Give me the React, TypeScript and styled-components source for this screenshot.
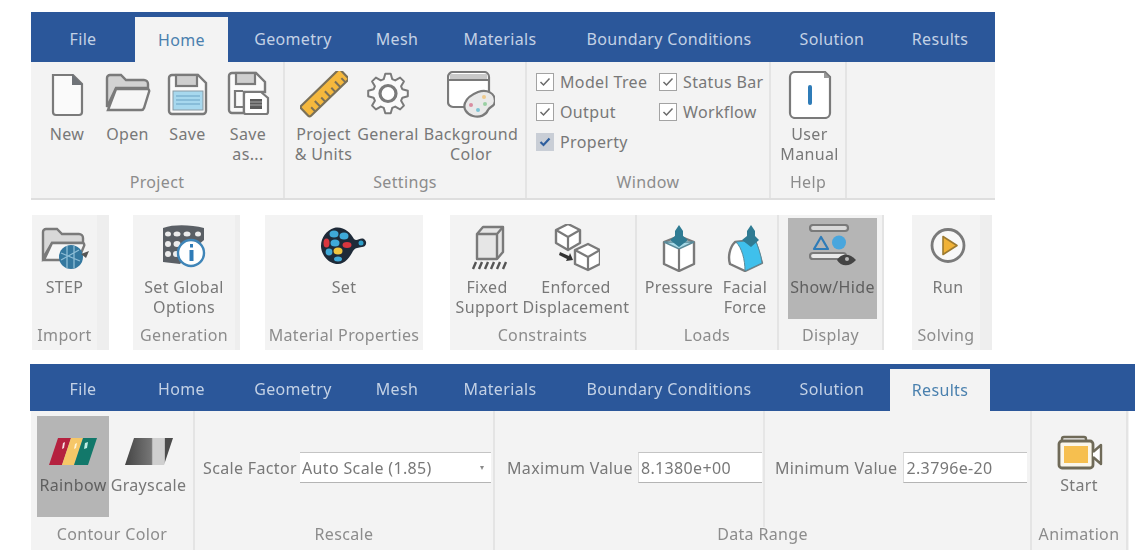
import React, { ReactNode } from "react";
import styled, { createGlobalStyle } from "styled-components";

const GlobalStyle = createGlobalStyle`
  html, body {
    margin: 0;
    padding: 0;
    background: #fff;
  }
  body {
    font-family: "Noto Sans", "Open Sans", sans-serif;
    font-size: 16px;
    letter-spacing: 0.35px;
    color: #6a6a6a;
  }
`;

const Page = styled.div`
  width: 1146px;
  height: 558px;
  overflow: hidden;
  display: flex;
  flex-direction: column;
  filter: blur(0.45px);
`;

const Ribbon = styled.section<{ $ml: number; $mt: number; $w: number }>`
  margin-left: ${(p) => p.$ml}px;
  margin-top: ${(p) => p.$mt}px;
  width: ${(p) => p.$w}px;
`;

const TabBar = styled.div<{ $lead: number; $h: number }>`
  display: flex;
  height: ${(p) => p.$h}px;
  padding-left: ${(p) => p.$lead}px;
  background: #2b579a;
`;

const Tab = styled.div<{ $w: number; $dy: number; $active?: boolean }>`
  width: ${(p) => p.$w}px;
  box-sizing: border-box;
  display: flex;
  align-items: center;
  justify-content: center;
  color: ${(p) => (p.$active ? "#4a80ae" : "#c3d1e5")};
  background: ${(p) => (p.$active ? "#f3f3f3" : "transparent")};
  margin-top: ${(p) => (p.$active ? "5px" : "0")};
  padding-top: ${(p) => (p.$active ? 0 : p.$dy)}px;
`;

const Body = styled.div<{ $w?: number; $ml?: number; $h: number; $line?: boolean }>`
  display: flex;
  width: ${(p) => (p.$w ? `${p.$w}px` : "auto")};
  margin-left: ${(p) => p.$ml ?? 0}px;
  height: ${(p) => p.$h}px;
  background: #f3f3f3;
  box-sizing: border-box;
  border-bottom: ${(p) => (p.$line ? "2px solid #dedede" : "0")};
`;

const PanelRow = styled.div`
  display: flex;
  margin-top: 15px;
  height: 135px;
`;

const Group = styled.div<{ $w: number; $ml?: number; $sep?: boolean; $strip?: number }>`
  width: ${(p) => p.$w}px;
  margin-left: ${(p) => p.$ml ?? 0}px;
  box-sizing: border-box;
  padding-right: ${(p) => p.$strip ?? 0}px;
  display: flex;
  flex-direction: column;
  background: #f3f3f3;
  border-right: ${(p) => (p.$sep ? "2px solid #e4e4e4" : "0")};
  box-shadow: ${(p) => (p.$strip ? `inset -${p.$strip}px 0 0 #eeeeee` : "none")};
`;

const GroupContent = styled.div<{ $pt: number; $pl?: number; $center?: boolean }>`
  display: flex;
  justify-content: ${(p) => (p.$center ? "center" : "flex-start")};
  padding-top: ${(p) => p.$pt}px;
  padding-left: ${(p) => p.$pl ?? 0}px;
  height: 101px;
`;

const GroupLabel = styled.div`
  flex: 1;
  display: flex;
  align-items: center;
  justify-content: center;
  line-height: 20px;
  color: #8c8c8c;
  white-space: nowrap;
`;

const ToolButton = styled.div<{ $w: number; $active?: boolean }>`
  width: ${(p) => p.$w}px;
  height: 101px;
  flex: none;
  display: flex;
  flex-direction: column;
  align-items: center;
  color: ${(p) => (p.$active ? "#5f5f5f" : "#787878")};
  background: ${(p) => (p.$active ? "#b5b5b5" : "transparent")};
`;

const IconSlot = styled.div`
  height: 59px;
  display: flex;
  align-items: center;
  justify-content: center;
`;

const ToolLabel = styled.div`
  line-height: 20px;
  text-align: center;
  white-space: nowrap;
`;

const CheckGrid = styled.div`
  display: grid;
  grid-template-columns: 123px auto;
  grid-auto-rows: 30px;
  padding: 2px 0 0 9px;
`;

const CheckRow = styled.div`
  display: flex;
  align-items: center;
  gap: 6px;
  color: #787878;
  white-space: nowrap;
`;

const Box = styled.span<{ $on?: boolean }>`
  width: 18px;
  height: 18px;
  box-sizing: border-box;
  display: flex;
  align-items: center;
  justify-content: center;
  background: ${(p) => (p.$on ? "#c9ced6" : "#fff")};
  border: 1px solid ${(p) => (p.$on ? "#c9ced6" : "#a3a3a3")};
`;

const Form = styled.div<{ $pl: number; $gap: number }>`
  display: flex;
  align-items: center;
  gap: ${(p) => p.$gap}px;
  height: 31px;
  margin-top: 41px;
  padding-left: ${(p) => p.$pl}px;
  color: #787878;
  white-space: nowrap;
`;

const Split = styled.div`
  display: flex;
  height: 106px;
`;

const SplitCell = styled.div<{ $w: number; $sep?: boolean }>`
  width: ${(p) => p.$w}px;
  box-sizing: border-box;
  height: 116px;
  border-right: ${(p) => (p.$sep ? "2px solid #e6e6e6" : "0")};
`;

const SelectBox = styled.div`
  width: 191px;
  height: 31px;
  box-sizing: border-box;
  display: flex;
  align-items: center;
  justify-content: space-between;
  padding: 0 7px 0 2px;
  background: #fff;
  border-top: 1px solid #c4c4c4;
  border-bottom: 1px solid #b4b4b4;
`;

const Caret = styled.span`
  width: 0;
  height: 0;
  border-left: 2.5px solid transparent;
  border-right: 2.5px solid transparent;
  border-top: 4px solid #8a8a8a;
`;

const ValueInput = styled.input`
  width: 124px;
  height: 31px;
  box-sizing: border-box;
  padding: 0 2px;
  font: inherit;
  letter-spacing: inherit;
  color: #787878;
  background: #fff;
  border: 0;
  border-top: 1px solid #c4c4c4;
  border-bottom: 1px solid #b4b4b4;
  border-left: 1px solid #dcdcdc;
  outline: none;
`;

const INK = "#7a7a7a";

function Ico({ children }: { children: ReactNode }) {
  return (
    <svg width="48" height="48" viewBox="0 0 48 48" fill="none">
      {children}
    </svg>
  );
}

function gear(cx: number, cy: number, r1: number, r2: number, n: number) {
  const pts: string[] = [];
  for (let i = 0; i < n; i++) {
    const a = (i / n) * Math.PI * 2;
    const s = (Math.PI * 2) / n;
    [
      [r2, a - s * 0.36],
      [r1, a - s * 0.17],
      [r1, a + s * 0.17],
      [r2, a + s * 0.36],
    ].forEach(([r, t]) => {
      pts.push(`${(cx + r * Math.sin(t)).toFixed(1)},${(cy - r * Math.cos(t)).toFixed(1)}`);
    });
  }
  return pts.join(" ");
}

const NewIcon = () => (
  <Ico>
    <path d="M10 4h20l9 9v28a3 3 0 0 1-3 3H13a3 3 0 0 1-3-3z" fill="#fafafa" stroke={INK} strokeWidth="2.2" />
    <path d="M29 3l11 11H29z" fill="#6f7378" />
  </Ico>
);

const OpenIcon = () => (
  <Ico>
    <path d="M3 36V7a3 3 0 0 1 3-3h11l5 5h18a4 4 0 0 1 4 4v4H12z" fill="#d2d2d2" stroke={INK} strokeWidth="2.4" />
    <path d="M4 39l8-21h31a2 2 0 0 1 2 3l-5 16a3 3 0 0 1-3 2z" fill="#f6f6f6" stroke={INK} strokeWidth="2.4" />
  </Ico>
);

const SaveIcon = () => (
  <Ico>
    <path d="M8 4h26l8 8v28a3 3 0 0 1-3 3H8a3 3 0 0 1-3-3V7a3 3 0 0 1 3-3z" fill="#fafafa" stroke={INK} strokeWidth="2.4" />
    <rect x="12" y="4" width="21" height="11" fill="#cfcfcf" stroke={INK} strokeWidth="2.2" />
    <rect x="9" y="20" width="30" height="19" fill="#a7d8ee" stroke="#8a9aa3" strokeWidth="1" />
    <path d="M12 25h24M12 29h24M12 33h24" stroke="#7fb4d2" strokeWidth="1.4" />
  </Ico>
);

const SaveAsIcon = () => (
  <Ico>
    <path d="M8 2h24l9 9v10H20v21H8a3 3 0 0 1-3-3V5a3 3 0 0 1 3-3z" fill="#fafafa" stroke={INK} strokeWidth="2.4" />
    <rect x="12" y="2" width="19" height="11" fill="#cfcfcf" stroke={INK} strokeWidth="2.2" />
    <path d="M19 20h-8v16h8" stroke={INK} strokeWidth="2.2" />
    <path d="M22 21h15l7 6v14a2 2 0 0 1-2 2H22a2 2 0 0 1-2-2V23a2 2 0 0 1 2-2z" fill="#fff" stroke={INK} strokeWidth="2.2" />
    <rect x="26" y="28" width="12" height="10" fill="#5a5a5a" />
    <path d="M26 31h12M26 34h12" stroke="#bdbdbd" strokeWidth="0.8" />
  </Ico>
);

const RulerIcon = () => (
  <Ico>
    <g transform="rotate(-44 24.5 22)">
      <rect x="-3" y="15" width="55" height="14" rx="2" fill="#f5b83d" stroke="#7a7058" strokeWidth="2.2" />
      <path d="M5 29v-6M12 29v-8M19 29v-6M26 29v-8M33 29v-6M40 29v-8M47 29v-6" stroke="#7a7058" strokeWidth="2" />
    </g>
  </Ico>
);

const GearIcon = () => (
  <Ico>
    <polygon points={gear(24, 22.5, 20, 15, 8)} fill="#fafafa" stroke={INK} strokeWidth="2" strokeLinejoin="round" />
    <circle cx="24" cy="22.5" r="8" fill="#fff" stroke={INK} strokeWidth="3.2" />
  </Ico>
);

const BackgroundIcon = () => (
  <Ico>
    <rect x="1" y="1" width="41" height="35" rx="5" fill="#fff" stroke={INK} strokeWidth="2.2" />
    <path d="M1 9h41" stroke={INK} strokeWidth="2" />
    <rect x="3" y="3" width="37" height="5" fill="#c9c9c9" />
    <path d="M31 21c9-3 17 1 17 9 0 6-5 5-7 9-2 5-8 8-15 6-7-2-10-8-8-13 2-6 8-9 13-11z" fill="#e9e9e9" stroke={INK} strokeWidth="2.2" />
    <circle cx="24" cy="34" r="2" fill="#d98ca0" />
    <circle cx="31" cy="39" r="2" fill="#7cc3d4" />
    <circle cx="38" cy="33" r="2" fill="#9ad0a3" />
    <circle cx="37" cy="26" r="2" fill="#eec98c" />
  </Ico>
);

const ManualIcon = () => (
  <Ico>
    <path d="M9 1h30l5 5v36a5 5 0 0 1-5 5H9a5 5 0 0 1-5-5V6a5 5 0 0 1 5-5z" fill="#fff" stroke={INK} strokeWidth="2.2" />
    <path d="M38 1l6 6h-6z" fill="#9a9a9a" />
    <rect x="22" y="14" width="4" height="20" rx="2" fill="#2f7cb8" />
  </Ico>
);

const StepIcon = () => (
  <Ico>
    <path d="M2 34V8a3 3 0 0 1 3-3h11l5 5h17a4 4 0 0 1 4 4v5H11z" fill="#d8d8d8" stroke={INK} strokeWidth="2.4" />
    <path d="M3 36l8-17h31a2 2 0 0 1 1 3l-5 12a3 3 0 0 1-3 2z" fill="#f6f6f6" stroke={INK} strokeWidth="2.4" />
    <ellipse cx="30" cy="33" rx="12" ry="12" fill="#34789f" />
    <path d="M20 29l19 8M20 36l18-10M26 22v22M33 22v22" stroke="#8dbdd6" strokeWidth="1.3" />
    <path d="M40 30l8-3-3 7z" fill="#555" />
  </Ico>
);

const GlobalIcon = () => (
  <Ico>
    <path d="M3 4c12-4 28-3 41 0v12l-14 12-10 12-17-2z" fill="#5a5f65" />
    <g fill="#ececec">
      <ellipse cx="8" cy="10" rx="3" ry="2.5" />
      <ellipse cx="17" cy="10" rx="3.5" ry="2.5" />
      <ellipse cx="27" cy="10" rx="3.5" ry="2.5" />
      <ellipse cx="38" cy="10" rx="3" ry="2.5" />
      <ellipse cx="8" cy="20" rx="3" ry="3" />
      <ellipse cx="17" cy="20" rx="3.5" ry="3" />
      <ellipse cx="27" cy="19" rx="3" ry="2.5" />
      <ellipse cx="8" cy="30" rx="3" ry="3" />
      <ellipse cx="16" cy="30" rx="3" ry="3" />
    </g>
    <circle cx="31" cy="29" r="13" fill="#fff" stroke="#3f85b8" strokeWidth="2.4" />
    <rect x="29.5" y="26" width="4" height="11" fill="#2f7cb8" />
    <rect x="30" y="20" width="3" height="3.5" fill="#2f7cb8" />
  </Ico>
);

const MaterialIcon = () => (
  <Ico>
    <path d="M14 4c9-2 16 4 20 11 3 3 6-2 10 0 4 3 2 8-2 8-4 1-6 0-9 4-3 6-8 13-15 13C8 40 1 30 1 22 1 13 7 6 14 4z" fill="#1e2a38" />
    <ellipse cx="14" cy="10" rx="4.5" ry="3.5" fill="#3fa9d8" />
    <ellipse cx="24" cy="12" rx="4.5" ry="3.5" fill="#3fa9d8" />
    <ellipse cx="6.5" cy="19" rx="3" ry="4.5" fill="#d9363e" />
    <ellipse cx="15" cy="19" rx="4.5" ry="3.5" fill="#3fa9d8" />
    <ellipse cx="27" cy="21" rx="4.5" ry="3" fill="#d9363e" />
    <ellipse cx="18" cy="27" rx="4.5" ry="3.6" fill="#f0c53f" />
    <ellipse cx="9" cy="28" rx="3.4" ry="3.4" fill="#3fa9d8" />
    <ellipse cx="18" cy="35" rx="4" ry="2.5" fill="#3fa9d8" />
    <circle cx="41" cy="19" r="2.5" fill="#2e9fc9" />
  </Ico>
);

const FixedIcon = () => (
  <Ico>
    <path d="M14 10l6-7h20v25l-6 7H14z" fill="#e6e6e6" stroke={INK} strokeWidth="2.4" strokeLinejoin="round" />
    <path d="M14 10h20v25M34 10l6-7" stroke={INK} strokeWidth="2.4" />
    <path d="M10 45l3-7M16 45l3-7M22 45l3-7M28 45l3-7M34 45l3-7M40 45l3-7" stroke="#555" strokeWidth="2.4" />
  </Ico>
);

const EnforcedIcon = () => (
  <Ico>
    <path d="M16 0l12 6v13l-12 7-12-7V6z" fill="#fff" stroke={INK} strokeWidth="2.4" strokeLinejoin="round" />
    <path d="M4 6l12 7 12-7M16 13v13" stroke={INK} strokeWidth="2.2" />
    <path d="M36 20l12 6v14l-12 6-13-6V26z" fill="#fff" stroke={INK} strokeWidth="2.4" strokeLinejoin="round" />
    <path d="M23 26l13 7 12-7M36 33v13" stroke={INK} strokeWidth="2.2" />
    <path d="M8 28l9 4 1-3 3 7-7 1 1-2-8-4z" fill="#333" />
  </Ico>
);

const PressureIcon = () => (
  <Ico>
    <path d="M9 18l15-6 15 6v22l-15 7-15-7z" fill="#fff" stroke={INK} strokeWidth="2.4" strokeLinejoin="round" />
    <path d="M9 18l15 7 15-7z" fill="#a6d9e6" stroke="#5b8a99" strokeWidth="1.5" />
    <path d="M24 25v22" stroke={INK} strokeWidth="2.2" />
    <path d="M20 7l4-6 4 6v5l5 4-9 7-9-7 5-4z" fill="#2f7b93" />
  </Ico>
);

const FacialIcon = () => (
  <Ico>
    <path d="M14 18C8 24 7 34 9 40l15 7 17-8-7-23z" fill="#fff" stroke={INK} strokeWidth="2.4" strokeLinejoin="round" />
    <path d="M15 18c6 6 9 18 9 29l17-8c-1-9-4-17-7-23z" fill="#3fc0ec" stroke="#5b8a99" strokeWidth="1" />
    <path d="M26 7l4-6 4 6v5l4 4-8 7-9-7 5-4z" fill="#2f7b93" />
  </Ico>
);

const ShowHideIcon = () => (
  <Ico>
    <rect x="1" y="1" width="38" height="6" rx="3" fill="#d9d9d9" stroke={INK} strokeWidth="2.2" />
    <path d="M5 25l7-12 7 12z" fill="none" stroke="#2f7cb8" strokeWidth="2.2" strokeLinejoin="round" />
    <circle cx="30" cy="18.5" r="7" fill="#49a6dd" />
    <rect x="1" y="29" width="36" height="6" rx="3" fill="#e8e8e8" stroke={INK} strokeWidth="2.2" />
    <path d="M28 36c4-7 13-7 19 0-6 7-15 7-19 0z" fill="#444" />
    <circle cx="38" cy="35" r="2" fill="#bbb" />
  </Ico>
);

const RunIcon = () => (
  <Ico>
    <circle cx="24" cy="21.5" r="16" fill="#f8f8f8" stroke={INK} strokeWidth="2.8" />
    <path d="M19 12.5l14 9-14 9z" fill="#f0b237" stroke="#9c7a30" strokeWidth="1.6" strokeLinejoin="round" />
  </Ico>
);

const RainbowIcon = () => (
  <Ico>
    <path d="M9 16h13l-9 27H0z" fill="#b5213f" />
    <path d="M22 16h12l-9 27H13z" fill="#f6c768" />
    <path d="M34 16h14l-9 27H25z" fill="#12786a" />
    <path d="M14 21l2-1-1 6-2 1z" fill="#f5dfe3" />
    <path d="M26 22l2-1-1 5-2 1z" fill="#fff4d8" />
    <path d="M36 21l3-1-1 6-3 1z" fill="#bfeee5" />
  </Ico>
);

const GrayscaleIcon = () => (
  <Ico>
    <defs>
      <linearGradient id="gs" x1="0" x2="1" y1="0" y2="0">
        <stop offset="0" stopColor="#454545" />
        <stop offset="0.55" stopColor="#767676" />
        <stop offset="0.58" stopColor="#cfcfcf" />
        <stop offset="0.82" stopColor="#cfcfcf" />
        <stop offset="0.84" stopColor="#4c4c4c" />
      </linearGradient>
    </defs>
    <path d="M9 16h39l-9 27H0z" fill="url(#gs)" />
  </Ico>
);

const CameraIcon = () => (
  <Ico>
    <g transform="translate(1 5)">
      <path d="M6 16v-4a2 2 0 0 1 2-2h20a2 2 0 0 1 2 2v4" stroke="#6f6a58" strokeWidth="2.4" />
      <rect x="3" y="14" width="34" height="27" rx="3" fill="#faf6ea" stroke="#6f6a58" strokeWidth="2.8" />
      <rect x="8" y="19" width="24" height="17" fill="#f6bf4f" />
      <path d="M37 25l8-7v19l-8-7" fill="#fff" stroke="#6f6a58" strokeWidth="2.4" strokeLinejoin="round" />
    </g>
  </Ico>
);

const Check = ({ on }: { on?: boolean }) => (
  <Box $on={on}>
    <svg width="12" height="10" viewBox="0 0 12 10" fill="none">
      <path d="M1.5 5l3 3 6-6.5" stroke={on ? "#2f5f9e" : "#6a6a6a"} strokeWidth={on ? 2.2 : 1.5} />
    </svg>
  </Box>
);

const TABS: [string, number][] = [
  ["File", 104],
  ["Home", 93],
  ["Geometry", 130],
  ["Mesh", 78],
  ["Materials", 128],
  ["Boundary Conditions", 210],
  ["Solution", 116],
  ["Results", 100],
];

function Tabs(props: { active: string; lead: number; h: number; dy: number }) {
  return (
    <TabBar $lead={props.lead} $h={props.h}>
      {TABS.map(([name, w]) => (
        <Tab key={name} $w={w} $dy={props.dy} $active={name === props.active}>
          {name}
        </Tab>
      ))}
    </TabBar>
  );
}

function Tool(props: { w: number; icon: ReactNode; lines: string[]; active?: boolean }) {
  return (
    <ToolButton $w={props.w} $active={props.active}>
      <IconSlot>{props.icon}</IconSlot>
      {props.lines.map((l) => (
        <ToolLabel key={l}>{l}</ToolLabel>
      ))}
    </ToolButton>
  );
}

export default function App() {
  return (
    <>
      <GlobalStyle />
      <Page>
        <Ribbon $ml={31} $mt={12} $w={964}>
          <Tabs active="Home" lead={0} h={50} dy={4} />
          <Body $h={138} $line>
            <Group $w={254} $sep>
              <GroupContent $pt={3} $pl={6}>
                <Tool w={60} icon={<NewIcon />} lines={["New"]} />
                <Tool w={61} icon={<OpenIcon />} lines={["Open"]} />
                <Tool w={59} icon={<SaveIcon />} lines={["Save"]} />
                <Tool w={62} icon={<SaveAsIcon />} lines={["Save", "as..."]} />
              </GroupContent>
              <GroupLabel>Project</GroupLabel>
            </Group>
            <Group $w={242} $sep>
              <GroupContent $pt={3} $pl={5}>
                <Tool w={67} icon={<RulerIcon />} lines={["Project", "& Units"]} />
                <Tool w={62} icon={<GearIcon />} lines={["General"]} />
                <Tool w={104} icon={<BackgroundIcon />} lines={["Background", "Color"]} />
              </GroupContent>
              <GroupLabel>Settings</GroupLabel>
            </Group>
            <Group $w={244} $sep>
              <GroupContent $pt={3}>
                <CheckGrid>
                  <CheckRow><Check />Model Tree</CheckRow>
                  <CheckRow><Check />Status Bar</CheckRow>
                  <CheckRow><Check />Output</CheckRow>
                  <CheckRow><Check />Workflow</CheckRow>
                  <CheckRow><Check on />Property</CheckRow>
                </CheckGrid>
              </GroupContent>
              <GroupLabel>Window</GroupLabel>
            </Group>
            <Group $w={76} $sep>
              <GroupContent $pt={3} $pl={3} $center>
                <Tool w={70} icon={<ManualIcon />} lines={["User", "Manual"]} />
              </GroupContent>
              <GroupLabel>Help</GroupLabel>
            </Group>
          </Body>
        </Ribbon>

        <PanelRow>
          <Group $w={77} $ml={32} $strip={12}>
            <GroupContent $pt={3} $center>
              <Tool w={60} icon={<StepIcon />} lines={["STEP"]} />
            </GroupContent>
            <GroupLabel>Import</GroupLabel>
          </Group>
          <Group $w={107} $ml={24} $strip={5}>
            <GroupContent $pt={3} $center>
              <Tool w={100} icon={<GlobalIcon />} lines={["Set Global", "Options"]} />
            </GroupContent>
            <GroupLabel>Generation</GroupLabel>
          </Group>
          <Group $w={158} $ml={25}>
            <GroupContent $pt={3} $center>
              <Tool w={100} icon={<MaterialIcon />} lines={["Set"]} />
            </GroupContent>
            <GroupLabel>Material Properties</GroupLabel>
          </Group>
          <Group $w={187} $ml={27} $sep>
            <GroupContent $pt={3} $pl={2}>
              <Tool w={70} icon={<FixedIcon />} lines={["Fixed", "Support"]} />
              <Tool w={108} icon={<EnforcedIcon />} lines={["Enforced", "Displacement"]} />
            </GroupContent>
            <GroupLabel>Constraints</GroupLabel>
          </Group>
          <Group $w={142} $sep>
            <GroupContent $pt={3} $pl={5}>
              <Tool w={74} icon={<PressureIcon />} lines={["Pressure"]} />
              <Tool w={58} icon={<FacialIcon />} lines={["Facial", "Force"]} />
            </GroupContent>
            <GroupLabel>Loads</GroupLabel>
          </Group>
          <Group $w={105} $sep>
            <GroupContent $pt={3} $pl={9}>
              <Tool w={89} active icon={<ShowHideIcon />} lines={["Show/Hide"]} />
            </GroupContent>
            <GroupLabel>Display</GroupLabel>
          </Group>
          <Group $w={80} $ml={28} $strip={12}>
            <GroupContent $pt={3} $pl={4} $center>
              <Tool w={60} icon={<RunIcon />} lines={["Run"]} />
            </GroupContent>
            <GroupLabel>Solving</GroupLabel>
          </Group>
        </PanelRow>

        <Ribbon $ml={30} $mt={14} $w={1105}>
          <Tabs active="Results" lead={1} h={47} dy={3} />
          <Body $w={1098} $ml={1} $h={139}>
            <Group $w={164} $sep>
              <GroupContent $pt={5} $pl={6}>
                <Tool w={72} active icon={<RainbowIcon />} lines={["Rainbow"]} />
                <Tool w={79} icon={<GrayscaleIcon />} lines={["Grayscale"]} />
              </GroupContent>
              <GroupLabel>Contour Color</GroupLabel>
            </Group>
            <Group $w={300} $sep>
              <Split>
                <Form $pl={8} $gap={3}>
                  Scale Factor
                  <SelectBox>
                    Auto Scale (1.85)
                    <Caret />
                  </SelectBox>
                </Form>
              </Split>
              <GroupLabel>Rescale</GroupLabel>
            </Group>
            <Group $w={537} $sep>
              <Split>
                <SplitCell $w={271} $sep>
                  <Form $pl={12} $gap={5}>
                    Maximum Value
                    <ValueInput readOnly value="8.1380e+00" />
                  </Form>
                </SplitCell>
                <SplitCell $w={266}>
                  <Form $pl={10} $gap={6}>
                    Minimum Value
                    <ValueInput readOnly value="2.3796e-20" />
                  </Form>
                </SplitCell>
              </Split>
              <GroupLabel>Data Range</GroupLabel>
            </Group>
            <Group $w={96} $sep>
              <GroupContent $pt={5} $center>
                <Tool w={90} icon={<CameraIcon />} lines={["Start"]} />
              </GroupContent>
              <GroupLabel>Animation</GroupLabel>
            </Group>
          </Body>
        </Ribbon>
      </Page>
    </>
  );
}
